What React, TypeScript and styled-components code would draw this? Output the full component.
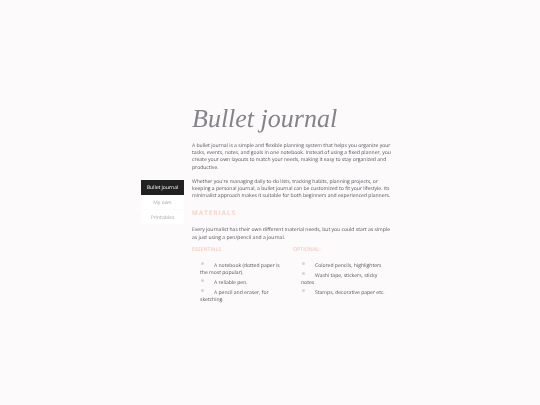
import React from 'react';
import styled, { createGlobalStyle } from 'styled-components';

const GlobalStyle = createGlobalStyle`
  html, body {
    margin: 0;
    padding: 0;
    background: #fcfafa;
  }
  body {
    font-family: "Open Sans", "Liberation Sans", sans-serif;
    color: #55535a;
    text-rendering: geometricPrecision;
  }
`;

const tabs = ['Bullet journal', 'My own', 'Printables'];
const essentials = ['A notebook (dotted paper is the most popular).', 'A reliable pen.', 'A pencil and eraser, for sketching.'];
const optional = ['Colored pencils, highlighters', 'Washi tape, stickers, sticky notes', 'Stamps, decorative paper etc.'];

const App: React.FC = () => {
  return (
    <Page>
      <GlobalStyle />
      <Sidebar>
        {tabs.map((tab, index) => (
          <Tab key={tab} $active={index === 0}>{tab}</Tab>
        ))}
      </Sidebar>
      <Main>
        <Title>Bullet journal</Title>
        <Paragraph>
          A bullet journal is a simple and flexible planning system that helps you organize your tasks, events, notes, and goals in one notebook. Instead of using a fixed planner, you create your own layouts to match your needs, making it easy to stay organized and productive.
        </Paragraph>
        <Paragraph>
          Whether you're managing daily to-do lists, tracking habits, planning projects, or keeping a personal journal, a bullet journal can be customized to fit your lifestyle. Its minimalist approach makes it suitable for both beginners and experienced planners.
        </Paragraph>
        <Heading>Materials</Heading>
        <Paragraph>
          Every journalist has their own different material needs, but you could start as simple as just using a pen/pencil and a journal.
        </Paragraph>
        <Columns>
          <div>
            <ColumnTitle>ESSENTIALS</ColumnTitle>
            <List>
              {essentials.map((item) => <Item key={item}>{item}</Item>)}
            </List>
          </div>
          <div>
            <ColumnTitle>OPTIONAL:</ColumnTitle>
            <List>
              {optional.map((item) => <Item key={item}>{item}</Item>)}
            </List>
          </div>
        </Columns>
      </Main>
    </Page>
  );
};

export default App;

const Page = styled.div`
  width: 540px;
  height: 405px;
  box-sizing: border-box;
  padding: 102px 0 0 141px;
  display: flex;
  align-items: flex-start;
  gap: 8px;
  overflow: hidden;
  filter: blur(0.3px);
`;

const Sidebar = styled.nav`
  width: 43px;
  margin-top: 78px;
  display: flex;
  flex-direction: column;
  background: #ffffff;
`;

const Tab = styled.div<{ $active: boolean }>`
  height: 15px;
  line-height: 16px;
  text-align: center;
  font-size: 5.05px;
  color: ${(p) => (p.$active ? '#ffffff' : '#a9a7aa')};
  background: ${(p) => (p.$active ? '#212121' : 'transparent')};
  border-bottom: ${(p) => (p.$active ? 'none' : '1px solid #fafafa')};
  box-sizing: border-box;
`;

const Main = styled.main`
  width: 202px;
`;

const Title = styled.h1`
  margin: 0 0 7px;
  height: 34px;
  font-family: "Liberation Serif", serif;
  font-style: italic;
  font-weight: 400;
  font-size: 26px;
  line-height: 34px;
  white-space: nowrap;
  color: #85838a;
`;

const Paragraph = styled.p`
  margin: 0 0 7px;
  font-size: 5.05px;
  line-height: 7.2px;
`;

const Heading = styled.h2`
  margin: 9px 0 10px;
  font-size: 6.2px;
  line-height: 8px;
  font-weight: 600;
  letter-spacing: 1.2px;
  text-transform: uppercase;
  color: #f8c9c4;
`;

const Columns = styled.div`
  display: grid;
  grid-template-columns: 101px 101px;
  margin-top: -3px;
`;

const ColumnTitle = styled.h3`
  margin: 0 0 9.5px;
  font-size: 5.2px;
  line-height: 7px;
  font-weight: 600;
  color: #f8c9c4;
`;

const List = styled.ul`
  margin: 0;
  padding: 0 8px;
  list-style: none;
`;

const Item = styled.li`
  font-size: 5.05px;
  line-height: 7.3px;
  margin-bottom: 2px;

  &::before {
    content: '';
    display: inline-block;
    width: 3px;
    height: 3px;
    margin: 0 10px 0 1px;
    vertical-align: 1.5px;
    border-radius: 50%;
    background: #dccfe2;
  }
`;
